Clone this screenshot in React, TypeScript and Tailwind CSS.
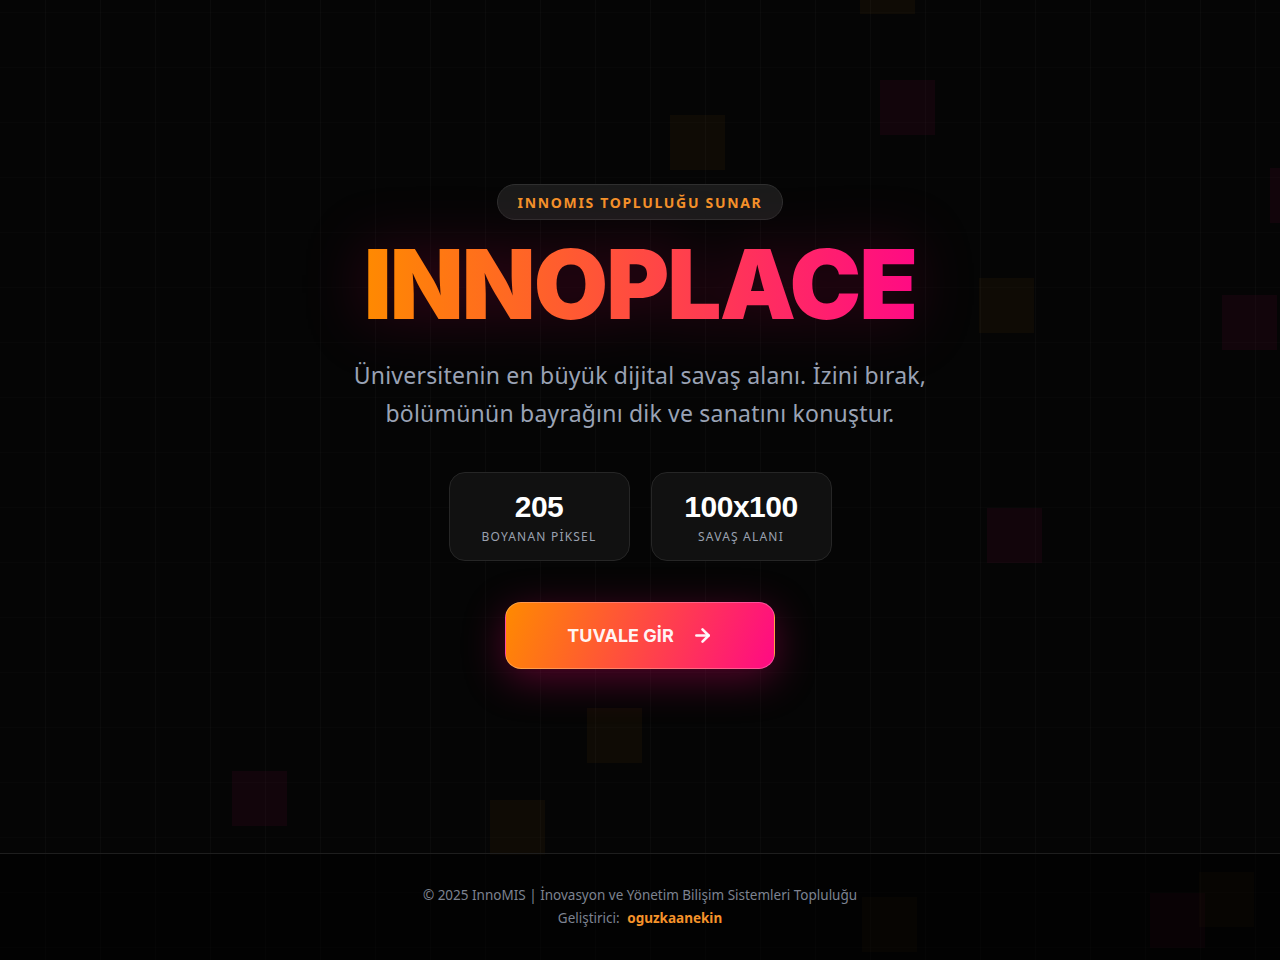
import { ArrowRight } from 'lucide-react';

// Faint "pixels" scattered over the grid. Orange or pink, ~55px each.
const pixels: { pos: string; tone: 'orange' | 'pink' }[] = [
  { pos: 'left-[860px] top-[-41px]', tone: 'orange' },
  { pos: 'left-[880px] top-[80px]', tone: 'pink' },
  { pos: 'left-[670px] top-[115px]', tone: 'orange' },
  { pos: 'left-[1270px] top-[168px]', tone: 'pink' },
  { pos: 'left-[979px] top-[278px]', tone: 'orange' },
  { pos: 'left-[1222px] top-[295px]', tone: 'pink' },
  { pos: 'left-[987px] top-[508px]', tone: 'pink' },
  { pos: 'left-[587px] top-[708px]', tone: 'orange' },
  { pos: 'left-[232px] top-[771px]', tone: 'pink' },
  { pos: 'left-[490px] top-[800px]', tone: 'orange' },
  { pos: 'left-[862px] top-[897px]', tone: 'orange' },
  { pos: 'left-[1150px] top-[893px]', tone: 'pink' },
  { pos: 'left-[1199px] top-[872px]', tone: 'orange' },
];

function Stat({ value, label }: { value: string; label: string }) {
  return (
    <div className="w-[181px] h-[89px] rounded-2xl bg-[#111111] border border-[#262626] flex flex-col items-center justify-center">
      <span className="font-['Liberation_Sans',Arial,sans-serif] font-bold text-[30px] leading-none tracking-[-0.5px] text-white mt-[2px]">
        {value}
      </span>
      <span className="mt-[9px] text-[12px] leading-none tracking-[0.1em] text-[#9aa1b0]">
        {label}
      </span>
    </div>
  );
}

export default function App() {
  return (
    <div className="relative min-h-screen w-full overflow-hidden bg-[#050505] font-['Noto_Sans',sans-serif]">
      {/* grid */}
      <div className="pointer-events-none absolute inset-0 bg-[linear-gradient(to_right,rgba(255,255,255,0.022)_1px,transparent_1px),linear-gradient(to_bottom,rgba(255,255,255,0.012)_1px,transparent_1px)] bg-size-[55px_55px] bg-position-[45px_12px]" />

      {/* floating pixels */}
      <div className="pointer-events-none absolute inset-0">
        {pixels.map((p, i) => (
          <div
            key={i}
            className={
              'absolute w-[55px] h-[55px] ' +
              p.pos +
              ' ' +
              (p.tone === 'orange' ? 'bg-[#ff8c00]/[0.04]' : 'bg-[#ff0080]/[0.05]')
            }
          />
        ))}
      </div>

      <div className="relative flex flex-col min-h-screen">
        {/* Hero */}
        <main className="h-[853px] flex flex-col items-center justify-center">
          <div className="h-[36px] px-5 rounded-full bg-[#1b1b1b] border border-[#2f2f2f] flex items-center">
            <span className="text-[14px] font-bold tracking-[0.12em] text-[#f5922a]">
              INNOMIS TOPLULUĞU SUNAR
            </span>
          </div>

          <h1 className="mt-[16px] font-['Inter',sans-serif] font-black text-[96px] leading-none tracking-[-0.02em] bg-[linear-gradient(90deg,#ff8a00,#ff0a84)] bg-clip-text text-transparent drop-shadow-[0_0_30px_rgba(150,0,60,0.35)]">
            INNOPLACE
          </h1>

          <p className="mt-[24px] text-center text-[23px] leading-[38px] tracking-[0.2px] text-[#9aa3b5]">
            Üniversitenin en büyük dijital savaş alanı. İzini bırak,
            <br />
            bölümünün bayrağını dik ve sanatını konuştur.
          </p>

          <div className="mt-[40px] flex gap-[21px]">
            <Stat value="205" label="BOYANAN PİKSEL" />
            <Stat value="100x100" label="SAVAŞ ALANI" />
          </div>

          <button className="mt-[41px] w-[270px] h-[67px] rounded-2xl border border-white/25 bg-[linear-gradient(110deg,#ff8a00,#ff0a84)] shadow-[0_10px_40px_rgba(230,0,110,0.35)] flex items-center justify-center gap-[18px]">
            <span className="font-['Inter',sans-serif] font-bold text-[18px] text-white/95">TUVALE GİR</span>
            <ArrowRight className="w-[21px] h-[21px] text-white/95" strokeWidth={3} />
          </button>
        </main>

        {/* Footer */}
        <footer className="h-[107px] border-t border-[#1e1e1e] bg-black/50 flex flex-col items-center justify-center text-[13.5px] leading-[23px] text-[#7d8391]">
          <p>© 2025 InnoMIS | İnovasyon ve Yönetim Bilişim Sistemleri Topluluğu</p>
          <p>
            Geliştirici:{' '}
            <span className="ml-1 font-bold text-[#f5922a]">oguzkaanekin</span>
          </p>
        </footer>
      </div>
    </div>
  );
}
